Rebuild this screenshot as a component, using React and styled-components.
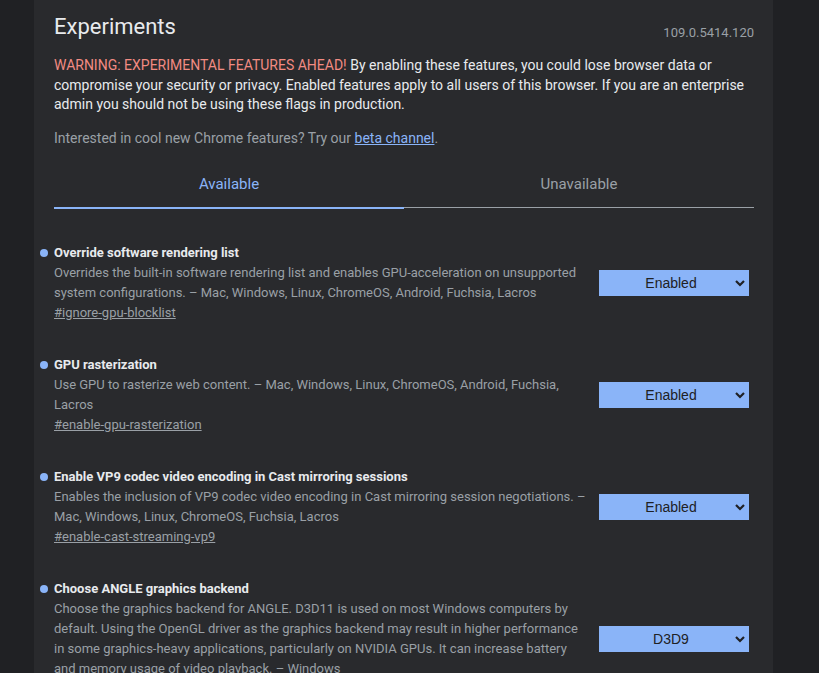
import React from 'react'
import styled, { createGlobalStyle } from 'styled-components'

const Global = createGlobalStyle`
body {
  margin: 0;
  background: #202124;
  font-family: Roboto, "Noto Sans", sans-serif;
  color: #e8eaed;
}
`

const Page = styled.div`
display: flex;
padding-left: 34px;
min-height: 673px;
`
const Panel = styled.div`
width: 700px;
background: #292a2d;
padding: 0 19px 40px 20px;
`
const Header = styled.div`
display: flex;
justify-content: space-between;
align-items: flex-end;
padding-top: 12px;
`
const Title = styled.h1`
margin: 0;
font-size: 22px;
font-weight: 400;
line-height: 30px;
`
const Version = styled.span`
font-size: 13px;
color: #9aa0a6;
margin-bottom: 2px;
`
const Warning = styled.p`
margin: 14px 0 0;
font-size: 14px;
line-height: 19.5px;
color: #e8eaed;
`
const Red = styled.span`
color: #f28b82;
`
const Hint = styled.p`
margin: 13px 0 0;
font-size: 14px;
line-height: 20px;
color: #9aa0a6;
`
const Link = styled.a`
color: #8ab4f8;
text-decoration: underline;
`
const Tabs = styled.div`
display: flex;
margin-top: 26px;
`
const Tab = styled.div`
flex: 1;
text-align: center;
font-size: 15px;
line-height: 20px;
padding-bottom: 13px;
color: ${({ $active }) => ($active ? '#8ab4f8' : '#9aa0a6')};
border-bottom: ${({ $active }) => ($active ? '2px solid #8ab4f8' : '1px solid #9aa0a6')};
margin-bottom: ${({ $active }) => ($active ? '0' : '1px')};
`
const List = styled.div`
display: flex;
flex-direction: column;
gap: 32px;
margin-top: 34px;
`
const Row = styled.div`
display: flex;
align-items: center;
`
const Info = styled.div`
width: 534px;
`
const Name = styled.div`
position: relative;
font-size: 13px;
font-weight: 700;
line-height: 20px;
color: #e8eaed;
&::before {
  content: '';
  position: absolute;
  left: -14px;
  top: 6px;
  width: 8px;
  height: 8px;
  border-radius: 50%;
  background: #8ab4f8;
}
`
const Desc = styled.div`
font-size: 13px;
line-height: 20px;
color: #9aa0a6;
`
const Tag = styled.a`
display: block;
width: fit-content;
font-size: 13px;
line-height: 20px;
color: #9aa0a6;
text-decoration: underline;
`
const Select = styled.div`
margin-left: auto;
margin-right: 5px;
width: 150px;
height: 26px;
background: #8ab4f8;
display: flex;
align-items: center;
font-family: "Liberation Sans", Arial, sans-serif;
font-size: 14px;
color: #202124;
`
const Value = styled.span`
flex: 1;
text-align: center;
padding-left: 8px;
`
const Chevron = styled.svg`
width: 10px;
height: 8px;
margin-right: 4px;
`

const flags = [
  {
    name: 'Override software rendering list',
    desc: 'Overrides the built-in software rendering list and enables GPU-acceleration on unsupported system configurations. – Mac, Windows, Linux, ChromeOS, Android, Fuchsia, Lacros',
    tag: '#ignore-gpu-blocklist',
    value: 'Enabled',
  },
  {
    name: 'GPU rasterization',
    desc: 'Use GPU to rasterize web content. – Mac, Windows, Linux, ChromeOS, Android, Fuchsia, Lacros',
    tag: '#enable-gpu-rasterization',
    value: 'Enabled',
  },
  {
    name: 'Enable VP9 codec video encoding in Cast mirroring sessions',
    desc: 'Enables the inclusion of VP9 codec video encoding in Cast mirroring session negotiations. – Mac, Windows, Linux, ChromeOS, Fuchsia, Lacros',
    tag: '#enable-cast-streaming-vp9',
    value: 'Enabled',
  },
  {
    name: 'Choose ANGLE graphics backend',
    desc: 'Choose the graphics backend for ANGLE. D3D11 is used on most Windows computers by default. Using the OpenGL driver as the graphics backend may result in higher performance in some graphics-heavy applications, particularly on NVIDIA GPUs. It can increase battery and memory usage of video playback. – Windows',
    tag: '#use-angle',
    value: 'D3D9',
  },
]

const App = () => {
  return (
    <Page>
      <Global />
      <Panel>
        <Header>
          <Title>Experiments</Title>
          <Version>109.0.5414.120</Version>
        </Header>
        <Warning>
          <Red>WARNING: EXPERIMENTAL FEATURES AHEAD!</Red> By enabling these features, you could lose browser data or compromise your security or privacy. Enabled features apply to all users of this browser. If you are an enterprise admin you should not be using these flags in production.
        </Warning>
        <Hint>
          Interested in cool new Chrome features? Try our <Link href="#">beta channel</Link>.
        </Hint>
        <Tabs>
          <Tab $active>Available</Tab>
          <Tab>Unavailable</Tab>
        </Tabs>
        <List>
          {flags.map((f) => (
            <Row key={f.tag}>
              <Info>
                <Name>{f.name}</Name>
                <Desc>{f.desc}</Desc>
                <Tag href="#">{f.tag}</Tag>
              </Info>
              <Select>
                <Value>{f.value}</Value>
                <Chevron viewBox="0 0 10 8">
                  <path d="M1 2 L5 6 L9 2" fill="none" stroke="#202124" strokeWidth="2.2" />
                </Chevron>
              </Select>
            </Row>
          ))}
        </List>
      </Panel>
    </Page>
  )
}

export default App
